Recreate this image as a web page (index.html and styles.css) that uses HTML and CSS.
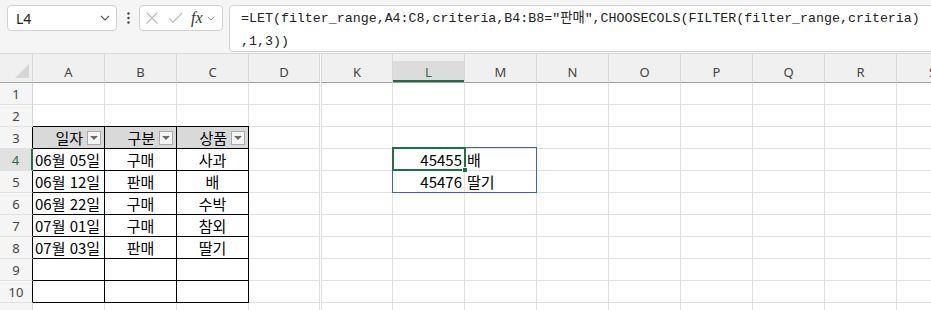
FILE: index.html
```html
<!DOCTYPE html>
<html lang="ko">
  <head>
    <meta charset="UTF-8" />
    <meta name="viewport" content="width=device-width, initial-scale=1.0" />
    <title>Excel - LET / CHOOSECOLS</title>
    <link rel="stylesheet" href="styles.css">
  </head>
  <body>
    <div class="app">
      <div class="topbar">
        <div class="namebox">
          <span>L4</span>
          <svg width="10" height="6" viewBox="0 0 10 6"><path d="M1 1 L5 5 L9 1" fill="none" stroke="#555" stroke-width="1.1"/></svg>
        </div>
        <div class="dots">
          <svg width="3" height="12" viewBox="0 0 3 12"><circle cx="1.5" cy="1.5" r="1.2" fill="#444"/><circle cx="1.5" cy="6" r="1.2" fill="#444"/><circle cx="1.5" cy="10.5" r="1.2" fill="#444"/></svg>
        </div>
        <div class="fnbox">
          <svg class="ico" width="14" height="14" viewBox="0 0 14 14"><path d="M1.5 1.5 L12.5 12.5 M12.5 1.5 L1.5 12.5" stroke="#b9b9b9" stroke-width="1.1"/></svg>
          <svg class="ico" width="15" height="12" viewBox="0 0 15 12"><path d="M1 6 L5 10.5 L14 1" fill="none" stroke="#b9b9b9" stroke-width="1.1"/></svg>
          <span class="fx">fx</span>
          <svg width="8" height="5" viewBox="0 0 8 5"><path d="M0.8 0.8 L4 4 L7.2 0.8" fill="none" stroke="#999" stroke-width="1"/></svg>
        </div>
        <div class="formula">=LET(filter_range,A4:C8,criteria,B4:B8="판매",CHOOSECOLS(FILTER(filter_range,criteria)<br>,1,3))</div>
      </div>

      <div class="sheet">
        <!-- column headers -->
        <div class="ch corner">
          <svg width="14" height="14" viewBox="0 0 14 14"><polygon points="14,0 14,14 0,14" fill="#d6d6d6"/></svg>
        </div>
        <div class="ch">A</div>
        <div class="ch">B</div>
        <div class="ch">C</div>
        <div class="ch d">D</div>
        <div class="ch k">K</div>
        <div class="ch sel">L</div>
        <div class="ch">M</div>
        <div class="ch">N</div>
        <div class="ch">O</div>
        <div class="ch">P</div>
        <div class="ch">Q</div>
        <div class="ch">R</div>
        <div class="ch">S</div>

        <!-- row 1 -->
        <div class="rh">1</div>
        <div class="c"></div><div class="c"></div><div class="c"></div><div class="c d"></div><div class="c k"></div>
        <div class="c"></div><div class="c"></div><div class="c"></div><div class="c"></div><div class="c"></div><div class="c"></div><div class="c"></div><div class="c"></div>

        <!-- row 2 -->
        <div class="rh">2</div>
        <div class="c"></div><div class="c"></div><div class="c"></div><div class="c d"></div><div class="c k"></div>
        <div class="c"></div><div class="c"></div><div class="c"></div><div class="c"></div><div class="c"></div><div class="c"></div><div class="c"></div><div class="c"></div>

        <!-- row 3 : table header -->
        <div class="rh edge">3</div>
        <div class="c t th">일자<span class="filter"></span></div>
        <div class="c t th">구분<span class="filter"></span></div>
        <div class="c t th">상품<span class="filter"></span></div>
        <div class="c d"></div><div class="c k"></div>
        <div class="c"></div><div class="c"></div><div class="c"></div><div class="c"></div><div class="c"></div><div class="c"></div><div class="c"></div><div class="c"></div>

        <!-- row 4 -->
        <div class="rh edge sel">4</div>
        <div class="c t">06월 05일</div>
        <div class="c t mid">구매</div>
        <div class="c t mid">사과</div>
        <div class="c d"></div><div class="c k"></div>
        <div class="c num active">45455
          <div class="spill"></div>
          <div class="cursor"></div>
          <div class="handle"></div>
        </div>
        <div class="c">배</div>
        <div class="c"></div><div class="c"></div><div class="c"></div><div class="c"></div><div class="c"></div><div class="c"></div>

        <!-- row 5 -->
        <div class="rh edge">5</div>
        <div class="c t">06월 12일</div>
        <div class="c t mid">판매</div>
        <div class="c t mid">배</div>
        <div class="c d"></div><div class="c k"></div>
        <div class="c num">45476</div>
        <div class="c">딸기</div>
        <div class="c"></div><div class="c"></div><div class="c"></div><div class="c"></div><div class="c"></div><div class="c"></div>

        <!-- row 6 -->
        <div class="rh edge">6</div>
        <div class="c t">06월 22일</div>
        <div class="c t mid">구매</div>
        <div class="c t mid">수박</div>
        <div class="c d"></div><div class="c k"></div>
        <div class="c"></div><div class="c"></div><div class="c"></div><div class="c"></div><div class="c"></div><div class="c"></div><div class="c"></div><div class="c"></div>

        <!-- row 7 -->
        <div class="rh edge">7</div>
        <div class="c t">07월 01일</div>
        <div class="c t mid">구매</div>
        <div class="c t mid">참외</div>
        <div class="c d"></div><div class="c k"></div>
        <div class="c"></div><div class="c"></div><div class="c"></div><div class="c"></div><div class="c"></div><div class="c"></div><div class="c"></div><div class="c"></div>

        <!-- row 8 -->
        <div class="rh edge">8</div>
        <div class="c t">07월 03일</div>
        <div class="c t mid">판매</div>
        <div class="c t mid">딸기</div>
        <div class="c d"></div><div class="c k"></div>
        <div class="c"></div><div class="c"></div><div class="c"></div><div class="c"></div><div class="c"></div><div class="c"></div><div class="c"></div><div class="c"></div>

        <!-- row 9 -->
        <div class="rh edge">9</div>
        <div class="c t"></div><div class="c t"></div><div class="c t"></div>
        <div class="c d"></div><div class="c k"></div>
        <div class="c"></div><div class="c"></div><div class="c"></div><div class="c"></div><div class="c"></div><div class="c"></div><div class="c"></div><div class="c"></div>

        <!-- row 10 -->
        <div class="rh edge">10</div>
        <div class="c t"></div><div class="c t"></div><div class="c t"></div>
        <div class="c d"></div><div class="c k"></div>
        <div class="c"></div><div class="c"></div><div class="c"></div><div class="c"></div><div class="c"></div><div class="c"></div><div class="c"></div><div class="c"></div>

        <!-- row 11, only its top shows -->
        <div class="rh"></div>
        <div class="c"></div><div class="c"></div><div class="c"></div><div class="c d"></div><div class="c k"></div>
        <div class="c"></div><div class="c"></div><div class="c"></div><div class="c"></div><div class="c"></div><div class="c"></div><div class="c"></div><div class="c"></div>
      </div>
    </div>
  </body>
</html>
```

FILE: styles.css
```css
* {
  box-sizing: border-box;
}
body {
  margin: 0;
  background: #ffffff;
  font-family: "Noto Sans", "Noto Sans CJK KR", sans-serif;
}
.app {
  width: 931px;
  height: 310px;
  overflow: hidden;
}

/* formula bar */
.topbar {
  display: flex;
  align-items: flex-start;
  height: 54px;
  padding: 5px 0 0 7px;
  background: #f5f5f5;
  border-bottom: 1px solid #dadada;
}
.namebox,
.fnbox {
  display: flex;
  align-items: center;
  height: 26px;
  background: #ffffff;
  border: 1px solid #d2d2d2;
  border-radius: 4px;
}
.namebox {
  width: 110px;
  justify-content: space-between;
  padding: 0 6px 0 8px;
  font-size: 14px;
  color: #222;
}
.dots {
  display: flex;
  justify-content: center;
  align-items: center;
  width: 22px;
  height: 26px;
}
.fnbox {
  width: 84px;
  padding: 0 4px 0 5px;
}
.fnbox .ico {
  margin-right: 9px;
}
.fx {
  font-family: "Liberation Serif", serif;
  font-style: italic;
  font-size: 16px;
  color: #333;
  margin: 0 4px 0 -1px;
  line-height: 1;
}
.formula {
  flex: 1;
  margin-left: 6px;
  margin-right: -20px;
  height: 47px;
  padding: 1px 12px 0 11px;
  background: #ffffff;
  border: 1px solid #d2d2d2;
  border-radius: 4px;
  font-family: "Liberation Mono", "Noto Sans CJK KR", monospace;
  font-size: 13.3px;
  line-height: 23px;
  color: #222;
  white-space: nowrap;
}

/* sheet grid */
.sheet {
  display: grid;
  grid-template-columns: 33px 72px 72px 72px 71px 73px repeat(8, 72px);
  grid-template-rows: 29px repeat(11, 22px);
}
.ch {
  display: flex;
  justify-content: center;
  align-items: center;
  padding-top: 7px;
  background: #f0f0f0;
  border-right: 1px solid #d9d9d9;
  border-bottom: 1px solid #a3a3a3;
  font-size: 13px;
  color: #444;
}
.ch.corner {
  justify-content: flex-end;
  align-items: flex-end;
  padding: 0 3px 4px 0;
}
.ch.sel {
  background: linear-gradient(#f0f0f0 7px, #dcdcdc 7px);
  box-shadow: inset 0 -2px 0 #1e7145;
  color: #1e7145;
}
.rh {
  display: flex;
  justify-content: center;
  align-items: center;
  background: #f5f5f5;
  border-right: 1px solid #d4d4d4;
  border-bottom: 1px solid #e1e1e1;
  font-size: 13px;
  color: #444;
}
.rh.edge {
  border-right-color: #000;
}
.rh.sel {
  background: #e1e1e1;
  color: #1e7145;
  border-right: 2px solid #1e7145;
}
.c {
  display: flex;
  align-items: center;
  padding: 0 2px;
  border-right: 1px solid #e1e1e1;
  border-bottom: 1px solid #e1e1e1;
  font-family: "Noto Sans CJK KR", sans-serif;
  font-size: 15px;
  color: #000;
  white-space: nowrap;
}
.k {
  margin-left: 1px;
  border-left: 1px solid #e1e1e1;
}
.ch.k {
  border-left-color: #d9d9d9;
}
.c.t {
  border-right-color: #000;
  border-bottom-color: #000;
}
.c.th {
  justify-content: flex-end;
  gap: 4px;
  padding-right: 3px;
  background: #d9d9d9;
  box-shadow: 0 -1px 0 #000;
}
.c.mid {
  justify-content: center;
}
.c.num {
  justify-content: flex-end;
  padding-right: 2px;
}
.filter {
  display: flex;
  justify-content: center;
  align-items: center;
  width: 14px;
  height: 14px;
  background: #f4f4f4;
  border: 1px solid #a9a9a9;
}
.filter::after {
  content: "";
  border-left: 4px solid transparent;
  border-right: 4px solid transparent;
  border-top: 4px solid #6b6b6b;
}

/* active cell and spill range, drawn over the grid */
.active {
  position: relative;
}
.spill {
  position: absolute;
  top: -2px;
  left: -1px;
  width: 145px;
  height: 46px;
  border: 1px solid #3767c4;
}
.cursor {
  position: absolute;
  top: -2px;
  left: -1px;
  width: 74px;
  height: 24px;
  border: 2px solid #1e7145;
}
.handle {
  position: absolute;
  top: 18px;
  left: 69px;
  width: 6px;
  height: 6px;
  background: #1e7145;
  border: 1px solid #ffffff;
}
```
